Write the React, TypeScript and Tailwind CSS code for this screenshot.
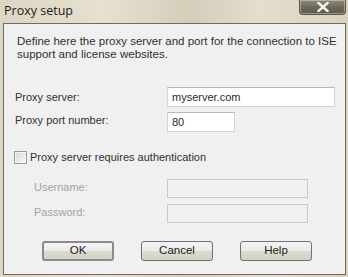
import React from "react";

const font = { fontFamily: '"Liberation Sans", Arial, sans-serif' };

function Btn({ label, def }: { label: string; def?: boolean }) {
  return (
    <div
      className={`w-[72px] h-[20px] rounded-[3px] flex items-center justify-center text-[11.5px] text-[#222] ${
        def ? "border-2 border-[#8a8a8a]" : "border border-[#707070]"
      } bg-[linear-gradient(#f3f3f3_0%,#ebebeb_50%,#dddad0_51%,#d4d1c6_100%)]`}
    >
      {label}
    </div>
  );
}

export default function App() {
  return (
    <div
      className="w-[348px] h-[277px] flex flex-col bg-[linear-gradient(90deg,#ddd6c4_0%,#e6e0d0_30%,#d4cdba_55%,#e4dece_75%,#d9d2bf_100%)] overflow-hidden"
      style={font}
    >
      <div className="h-[23px] flex items-start relative">
        <span
          className="ml-[4px] mt-[2px] text-[12.5px] text-[#1c1c1c]"
          style={{ fontFamily: '"Open Sans", "Noto Sans", sans-serif' }}
        >
          Proxy setup
        </span>
        <div className="absolute left-[299px] top-0 w-[47px] h-[15px] rounded-b-[4px] border border-t-0 border-[#5a5748] bg-[linear-gradient(#8e8a7a,#6b6859_55%,#5f5c4e)] flex items-center justify-center shadow-[inset_0_0_0_1px_rgba(255,255,255,0.35)]">
          <svg width="12" height="10" viewBox="0 0 12 10">
            <path d="M1.5 1 L10.5 9 M10.5 1 L1.5 9" stroke="#f4f4f0" strokeWidth="2.4" strokeLinecap="square" />
          </svg>
        </div>
      </div>
      <div className="ml-[3px] w-[343px] h-[252px] border border-[#6e6b60] bg-[#f0f0f0] flex flex-col text-[11px] text-[#303030]">
        <div className="pl-[13px] pt-[11px] leading-[13px] text-[11.5px]">
          Define here the proxy server and port for the connection to ISE
          <br />
          support and license websites.
        </div>
        <div className="mt-[26px] flex items-center h-[20px] pl-[11px]">
          <span className="w-[152px]">Proxy server:</span>
          <div className="w-[168px] h-[20px] border border-[#d4d4d4] border-t-[#b8b8b8] bg-white flex items-center pl-[4px] text-[#2a2a2a]">
            myserver.com
          </div>
        </div>
        <div className="mt-[5px] flex items-center h-[20px] pl-[11px]">
          <span className="w-[152px] -mt-[3px]">Proxy port number:</span>
          <div className="w-[68px] h-[20px] border border-[#d4d4d4] border-t-[#b8b8b8] bg-white flex items-center pl-[4px] text-[#2a2a2a]">
            80
          </div>
        </div>
        <div className="mt-[19px] flex items-center h-[13px] pl-[10px]">
          <div className="w-[13px] h-[13px] border border-[#9a9a9a] bg-[linear-gradient(135deg,#d6d6d6,#f7f7f7)] shadow-[inset_0_0_0_1px_#f4f4f4]" />
          <span className="ml-[3px] text-[11px]">Proxy server requires authentication</span>
        </div>
        <div className="mt-[15px] flex items-center h-[19px] pl-[30px] text-[#a3a3a3]">
          <span className="w-[133px] -mt-[3px]">Username:</span>
          <div className="w-[141px] h-[19px] border border-[#c9c9c9] bg-[#f0f0f0]" />
        </div>
        <div className="mt-[6px] flex items-center h-[19px] pl-[30px] text-[#a3a3a3]">
          <span className="w-[133px] -mt-[3px]">Password:</span>
          <div className="w-[141px] h-[19px] border border-[#c9c9c9] bg-[#f0f0f0]" />
        </div>
        <div className="mt-[18px] flex pl-[38px] gap-[27px]">
          <Btn label="OK" def />
          <Btn label="Cancel" />
          <Btn label="Help" />
        </div>
      </div>
    </div>
  );
}
